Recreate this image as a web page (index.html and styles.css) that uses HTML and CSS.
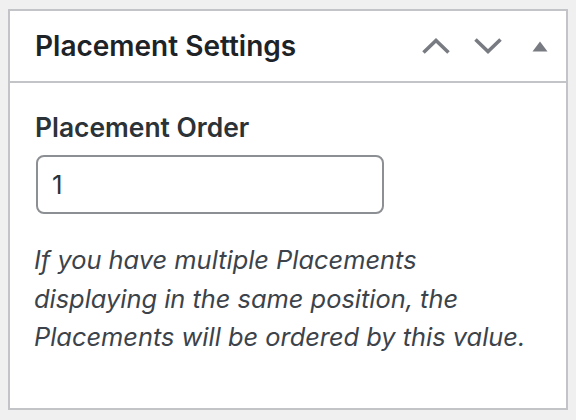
FILE: index.html
```html
<!DOCTYPE html>
<html>
<head>
<meta charset="utf-8">
<link rel="stylesheet" href="styles.css">
</head>
<body>
<div class="postbox">
  <div class="postbox-header">
    <h2 class="hndle">Placement Settings</h2>
    <div class="handle-actions">
      <button class="handle-btn" aria-label="Move up">
        <svg width="28" height="16" viewBox="0 0 28 16"><polyline points="1.5,14.5 14,2.5 26.5,14.5" fill="none" stroke="#787c82" stroke-width="3.6"/></svg>
      </button>
      <button class="handle-btn" aria-label="Move down">
        <svg width="28" height="16" viewBox="0 0 28 16"><polyline points="1.5,1.5 14,13.5 26.5,1.5" fill="none" stroke="#787c82" stroke-width="3.6"/></svg>
      </button>
      <button class="handle-btn" aria-label="Toggle panel">
        <svg width="16" height="11" viewBox="0 0 16 11"><polygon points="0.5,10.5 8,0.5 15.5,10.5" fill="#787c82"/></svg>
      </button>
    </div>
  </div>
  <div class="inside">
    <label class="field-label" for="order">Placement Order</label>
    <input id="order" class="order-input" type="text" value="1">
    <p class="description">If you have multiple Placements<br>displaying in the same position, the<br>Placements will be ordered by this value.</p>
  </div>
</div>
</body>
</html>
```
FILE: styles.css
```css
html, body {
  margin: 0;
  padding: 0;
  background: #f0f0f1;
}
body {
  padding: 9px 8px 0 8px;
  font-family: Inter, "Liberation Sans", sans-serif;
}
.postbox {
  width: 560px;
  height: 401px;
  box-sizing: border-box;
  background: #fff;
  border: 2px solid #c3c4c7;
}
.postbox-header {
  height: 70px;
  border-bottom: 2px solid #c3c4c7;
  display: flex;
  align-items: center;
  justify-content: space-between;
}
.hndle {
  margin: 0 0 0 25px;
  font-size: 28px;
  line-height: 34px;
  font-weight: 600;
  color: #1d2327;
}
.handle-actions {
  display: flex;
  align-items: center;
  height: 100%;
}
.handle-btn {
  width: 52px;
  height: 100%;
  padding: 0;
  margin: 0;
  border: 0;
  background: transparent;
  display: flex;
  align-items: center;
  justify-content: center;
}
.inside {
  padding: 28px 0 0 25px;
  display: flex;
  flex-direction: column;
  align-items: flex-start;
}
.field-label {
  font-size: 26.4px;
  font-weight: 600;
  color: #2c3338;
  line-height: 32px;
}
.order-input {
  margin: 12px 0 0 1px;
  width: 348px;
  height: 59px;
  box-sizing: border-box;
  border: 2px solid #8c8f94;
  border-radius: 8px;
  padding: 0 14px;
  font-family: Inter, "Liberation Sans", sans-serif;
  font-size: 26px;
  color: #2c3338;
  background: #fff;
}
.description {
  margin: 27px 0 0 -1px;
  font-size: 25.4px;
  font-style: italic;
  line-height: 38.5px;
  color: #3c434a;
}
```
